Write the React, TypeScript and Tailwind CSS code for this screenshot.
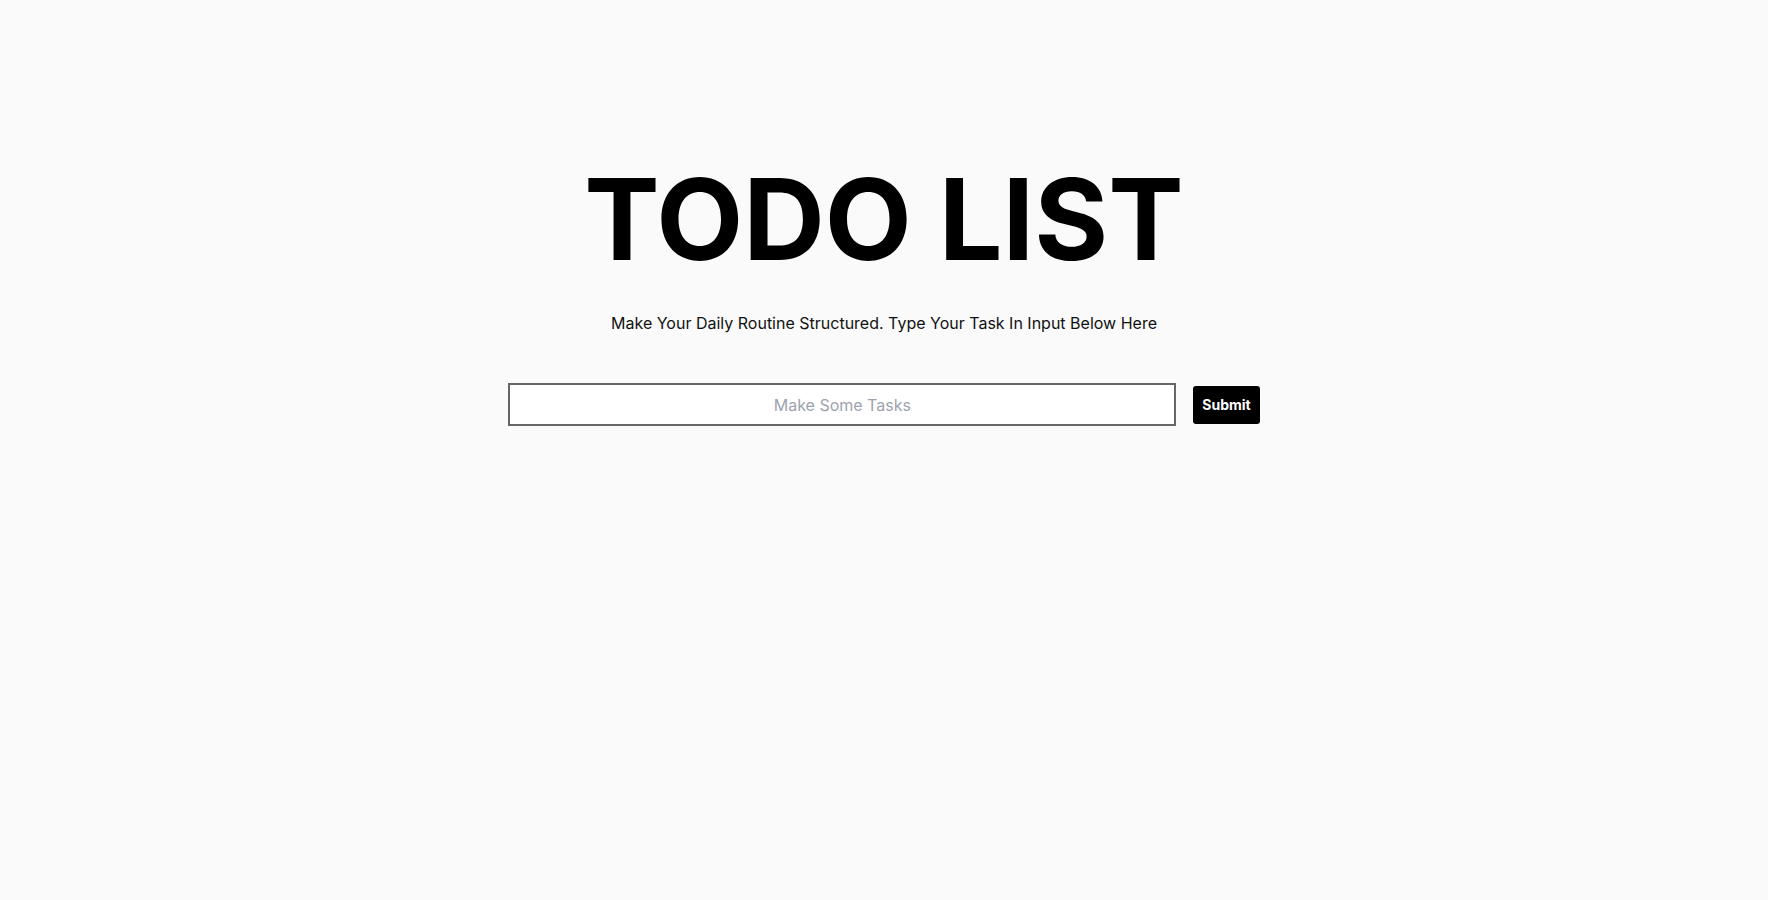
import { useState } from "react";

export default function App() {
  const [task, setTask] = useState("");

  const handleSubmit = (e: React.FormEvent) => {
    e.preventDefault();
    setTask("");
  };

  return (
    <div
      className="min-h-screen bg-[#fafafa] flex flex-col items-center pt-[163px]"
      style={{ fontFamily: "Inter, 'Noto Sans', sans-serif" }}
    >
      <h1 className="text-[113px] font-bold leading-none text-black">
        TODO LIST
      </h1>
      <p className="mt-[35px] text-base text-[#111]">
        Make Your Daily Routine Structured. Type Your Task In Input Below Here
      </p>

      <form onSubmit={handleSubmit} className="mt-[48px] flex items-center gap-[17px]">
        <input
          value={task}
          onChange={(e) => setTask(e.target.value)}
          placeholder="Make Some Tasks"
          className="w-[668px] h-[43px] border-2 border-[#666] bg-white text-center text-base outline-none placeholder:text-[#9ca3af]"
        />
        <button
          type="submit"
          className="h-[38px] px-[9px] bg-black text-white text-sm font-bold rounded-[3px]"
        >
          Submit
        </button>
      </form>
    </div>
  );
}
